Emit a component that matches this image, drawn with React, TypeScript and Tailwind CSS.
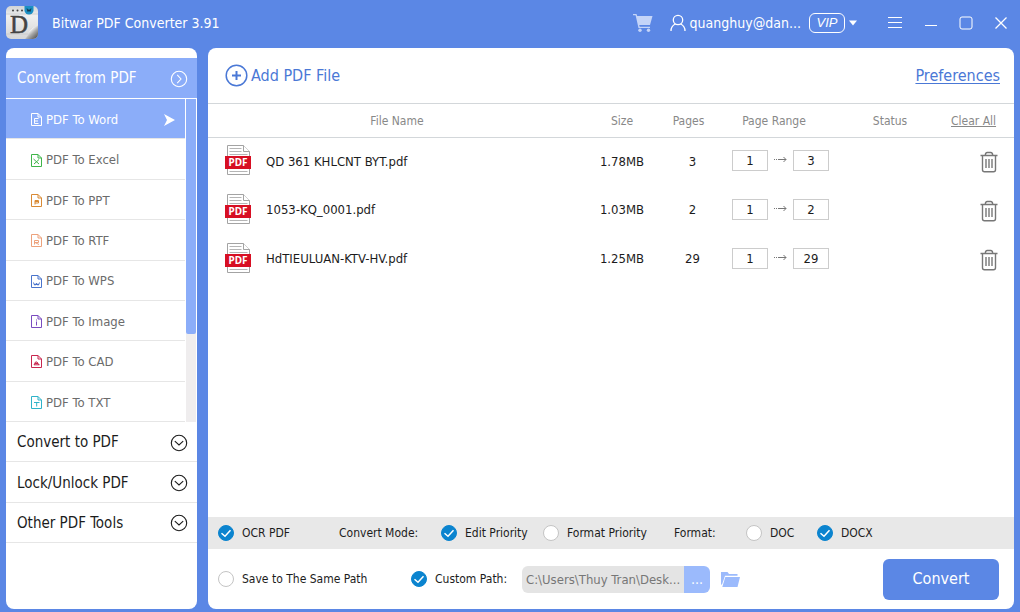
import { useState } from 'react'
import { clsx } from 'clsx'

const FORMATS = [
  { id: 'word',  label: 'PDF To Word',  color: 'text-white' },
  { id: 'excel', label: 'PDF To Excel', color: 'text-[#3fb54a]' },
  { id: 'ppt',   label: 'PDF To PPT',   color: 'text-[#d98a35]' },
  { id: 'rtf',   label: 'PDF To RTF',   color: 'text-[#eda27c]' },
  { id: 'wps',   label: 'PDF To WPS',   color: 'text-[#4a74cc]' },
  { id: 'image', label: 'PDF To Image', color: 'text-[#7a4cc0]' },
  { id: 'cad',   label: 'PDF To CAD',   color: 'text-[#c8274f]' },
  { id: 'txt',   label: 'PDF To TXT',   color: 'text-[#2fb3c9]' },
]

const SECTIONS = ['Convert to PDF', 'Lock/Unlock PDF', 'Other PDF Tools']

const FILES = [
  { name: 'QD 361 KHLCNT BYT.pdf', size: '1.78MB', pages: 3 },
  { name: '1053-KQ_0001.pdf',      size: '1.03MB', pages: 2 },
  { name: 'HdTIEULUAN-KTV-HV.pdf', size: '1.25MB', pages: 29 },
]

// Small strokes drawn inside each format's page icon
const MARKS: Record<string, string> = {
  word:  'M7.500 5.500h-4v5h4M3.500 8h3.500',
  excel: 'M2.500 5l5.500 5M8 5.500l-5 4.500',
  ppt:   'M4 10.500v-4h3.500v2.500h-3.500M4 7.500h3',
  rtf:   'M3.500 10.500v-4h4v2h-3.500l4 2',
  wps:   'M2.500 7.500l1 2.500h1l1-2 1 2h1l1-2.500M3 9.500h5',
  image: 'M5.500 4.500v1M5.500 6.500v4',
  cad:   'M3 10l1.500-3h1.500l2 3M3 9.800h5.500M4 8.500h3',
  txt:   'M3 6.500h5.500M5.700 6.500v4',
}

function FormatIcon({ id, className }: { id: string; className?: string }) {
  return (
    <svg className={className} width="11" height="13" viewBox="0 0 11 13" fill="none" stroke="currentColor">
      <path d="M.5.5H7l3.500 3.500v8.500H.5z" />
      <path d="M7 .5v3.500h3.500" />
      <path d={MARKS[id]} />
    </svg>
  )
}

function CircleChevron({ right }: { right?: boolean }) {
  return (
    <svg width="18" height="18" viewBox="0 0 18 18" fill="none" stroke="currentColor" strokeWidth="1.1">
      <circle cx="9" cy="9" r="7.700" />
      <path d={right ? 'M7.200 4.800 11 9l-3.800 4.200' : 'M4.800 7.200 9 11l4.200-3.800'} />
    </svg>
  )
}

function Logo() {
  return (
    <svg width="34" height="34" viewBox="0 0 34 34" aria-hidden="true">
      <defs>
        <linearGradient id="paper" x1="0" y1="0" x2="0" y2="1">
          <stop offset="0" stopColor="#cfd3d6" />
          <stop offset=".3" stopColor="#efefef" />
          <stop offset="1" stopColor="#d6d6d6" />
        </linearGradient>
        <linearGradient id="curl" x1=".2" y1=".2" x2=".8" y2=".9">
          <stop offset="0" stopColor="#777" />
          <stop offset=".3" stopColor="#eee" />
          <stop offset=".6" stopColor="#aaa" />
          <stop offset="1" stopColor="#666" />
        </linearGradient>
      </defs>
      <rect x="1" y="0" width="32" height="33" rx="5" fill="url(#paper)" />
      <path d="M1 8h32M1 28h24" stroke="#c2c4c6" strokeWidth=".6" />
      <circle cx="8" cy="4.500" r="1" fill="#444" />
      <circle cx="12.500" cy="4.500" r="1" fill="#444" />
      <circle cx="17" cy="4.500" r="1" fill="#444" />
      <path d="M19.500 0h9v4.500a4.500 4 0 0 1-9 0z" fill="#1b8fc4" />
      <path d="M22 2.500l1 3 1-2 1 2 1-3" fill="none" stroke="#12374c" />
      <text x="5" y="27" fontFamily="Liberation Serif, serif" fontSize="25" fill="#444" stroke="#444" strokeWidth=".5">D</text>
      <path d="M33 19c-2 3-5 2-7 3.500s-2 6.500-6 10.500h8a5 5 0 0 0 5-5z" fill="url(#curl)" />
    </svg>
  )
}

function PdfIcon() {
  return (
    <svg width="26" height="30" viewBox="0 0 26 30" aria-hidden="true">
      <path d="M2.500.5h16l6 6v23h-22z" fill="#fff" stroke="#a3a3a3" />
      <path d="M18.500.5v6h6" fill="#fff" stroke="#a3a3a3" />
      <path d="M4.500 3.500h12M4.500 6.500h12M4.500 9.500h18M4.500 26.500h18" stroke="#b5b5b5" />
      <path d="M0 11h26v13H0z" fill="#d70f23" />
      <text x="13" y="21" textAnchor="middle" fontFamily="Noto Sans, sans-serif" fontSize="10" fontWeight="700" fill="#fff">PDF</text>
    </svg>
  )
}

function ArrowIcon() {
  return (
    <svg width="13" height="8" viewBox="0 0 13 8" fill="none" stroke="#777">
      <path d="M0 3.500h5" strokeDasharray="1 1" />
      <path d="M5 3.500h7M9.500 1l2.500 2.500L9.500 6" />
    </svg>
  )
}

function TrashIcon() {
  return (
    <svg width="18" height="22" viewBox="0 0 18 22" fill="none" stroke="#777" strokeWidth="1.4">
      <path d="M.5 4.500h17M5.300 4.500c0-2 .7-3 2-3h3.400c1.300 0 2 1 2 3M2.500 4.500v14.200a2 2 0 0 0 2 2h9a2 2 0 0 0 2-2V4.500" />
      <path d="M6 8v9M9 8v9M12 8v9" />
    </svg>
  )
}

interface TickProps {
  label: string
  type?: 'radio' | 'checkbox'
  name?: string
  defaultChecked?: boolean
  className?: string
}

function Tick({ label, type = 'radio', name, defaultChecked, className }: TickProps) {
  return (
    <label className={clsx('flex items-center gap-2 whitespace-nowrap', className)}>
      <span className="grid size-4 place-items-center">
        <input
          type={type}
          name={name}
          defaultChecked={defaultChecked}
          className="peer col-start-1 row-start-1 size-4 appearance-none rounded-full border border-[#c4c4c4] bg-white checked:border-[#0b84cf] checked:bg-[#0b84cf]"
        />
        <svg className="pointer-events-none invisible col-start-1 row-start-1 peer-checked:visible" width="16" height="16" viewBox="0 0 16 16" fill="none" stroke="#fff" strokeWidth="1.5">
          <path d="M3.500 8.200 7 11.300l5.500-6" />
        </svg>
      </span>
      {label}
    </label>
  )
}

function TitleBar() {
  return (
    <header className="flex h-12 items-center pr-3 pb-[2px] pl-[5px] text-white">
      <Logo />
      <h1 className="ml-[13px] text-sm">Bitwar PDF Converter 3.91</h1>
      <div className="ml-auto flex items-center">
        <button aria-label="Cart" className="mr-4">
          <svg width="22" height="20" viewBox="0 0 22 20" fill="#c4d4f8">
            <path d="M1 1h3.500l.7 2H20.500l-2.500 9H7.200l.5 1.800H18V15H6.500L3.600 2.300H1z" />
            <circle cx="8" cy="17.300" r="1.700" />
            <circle cx="16.500" cy="17.300" r="1.700" />
          </svg>
        </button>
        <button className="flex items-center gap-1 text-sm">
          <svg width="16" height="18" viewBox="0 0 16 18" fill="none" stroke="currentColor" strokeWidth="1.3">
            <circle cx="8" cy="6" r="4.700" />
            <path d="M1 17c0-4 2-6 4.500-7M15 17c0-4-2-6-4.500-7" />
          </svg>
          quanghuy@dan...
          <span className="ml-1 flex h-5 w-9 items-center justify-center rounded-md border border-white font-['Liberation_Sans',sans-serif] text-[13px] italic">VIP</span>
          <svg width="8" height="6" viewBox="0 0 8 6" fill="currentColor"><path d="M0 .5h8L4 5.500z" /></svg>
        </button>
        <div className="ml-[30px] flex items-center gap-[21px]">
          <button aria-label="Menu">
            <svg width="16" height="14" viewBox="0 0 16 14" stroke="currentColor"><path d="M1 1.500h14M1 6.500h14M1 11.500h14" /></svg>
          </button>
          <button aria-label="Minimize">
            <svg width="14" height="14" viewBox="0 0 14 14" stroke="currentColor"><path d="M1 9.500h12" /></svg>
          </button>
          <button aria-label="Maximize">
            <svg width="14" height="14" viewBox="0 0 14 14" fill="none" stroke="currentColor"><rect x="1" y="1" width="12" height="12" rx="2" /></svg>
          </button>
          <button aria-label="Close">
            <svg width="14" height="14" viewBox="0 0 14 14" stroke="currentColor" strokeWidth="1.300"><path d="M1.500 1.500l11 11M12.500 1.500l-11 11" /></svg>
          </button>
        </div>
      </div>
    </header>
  )
}

function Sidebar() {
  const [active, setActive] = useState('word')

  return (
    <nav className="w-[191px] shrink-0 overflow-hidden rounded-lg bg-white pt-[10px]">
      <button className="flex h-[41px] w-full items-center justify-between border-b border-white bg-[#8badf9] pt-px pr-[9px] pl-[11px] text-[15px] text-white">
        Convert from PDF
        <CircleChevron right />
      </button>
      <div className="flex h-[323px]">
        <ul className="grid flex-1 grid-rows-8">
          {FORMATS.map(({ id, label, color }) => (
            <li key={id} className="border-b border-[#e6e6e6]">
              <button
                onClick={() => setActive(id)}
                className={clsx(
                  'flex h-full w-full items-center gap-1 pt-[2px] pr-[10px] pl-[25px] text-[13px]',
                  active === id ? 'bg-[#8badf9] text-white' : 'text-[#6b6b6b]'
                )}
              >
                <FormatIcon id={id} className={color} />
                {label}
                {active === id && (
                  <svg className="ml-auto" width="11" height="12" viewBox="0 0 11 12" fill="currentColor">
                    <path d="M0 0l11 6L0 12l3-6z" />
                  </svg>
                )}
              </button>
            </li>
          ))}
        </ul>
        {/* Scrollbar */}
        <div className="w-3 border-x border-white bg-[#efedee]">
          <div className="h-[235px] rounded-b-xs bg-[#8badf9]" />
        </div>
      </div>
      <div className="grid h-[121px] grid-rows-3">
        {SECTIONS.map((label) => (
          <button key={label} className="flex items-center justify-between border-b border-[#e6e6e6] pt-[2px] pr-[9px] pl-[11px] text-[15px] text-[#1c1c1c]">
            {label}
            <CircleChevron />
          </button>
        ))}
      </div>
    </nav>
  )
}

function FileTable() {
  return (
    <table className="w-full table-fixed border-collapse">
      <colgroup>
        <col className="w-[58px]" />
        <col />
        <col className="w-[72px]" />
        <col className="w-[61px]" />
        <col className="w-[110px]" />
        <col className="w-[122px]" />
        <col className="w-[63px]" />
      </colgroup>
      <thead>
        <tr className="h-[34px] border-y border-[#d3d7da] text-xs text-[#888]">
          <th colSpan={2} className="font-normal">File Name</th>
          <th className="font-normal">Size</th>
          <th className="font-normal">Pages</th>
          <th className="font-normal">Page Range</th>
          <th className="font-normal">Status</th>
          <th className="pr-[18px] text-right font-normal whitespace-nowrap">
            <button className="underline">Clear All</button>
          </th>
        </tr>
      </thead>
      <tbody className="text-[13px] text-[#1c1c1c]">
        {FILES.map(({ name, size, pages }) => (
          <tr key={name} className="h-[49px]">
            <td className="pb-1 pl-[17px]"><PdfIcon /></td>
            <td className="truncate pb-[2px]">{name}</td>
            <td className="pb-[2px] text-center">{size}</td>
            <td className="pb-[2px] pl-2 text-center">{pages}</td>
            <td className="pb-1">
              <div className="flex items-center justify-end gap-[6px]">
                <input aria-label={`First page of ${name}`} defaultValue={1} className="h-[21px] w-9 border border-[#ccc] text-center" />
                <ArrowIcon />
                <input aria-label={`Last page of ${name}`} defaultValue={pages} className="h-[21px] w-9 border border-[#ccc] text-center" />
              </div>
            </td>
            <td />
            <td className="pr-4">
              <button aria-label={`Remove ${name}`} className="ml-auto block"><TrashIcon /></button>
            </td>
          </tr>
        ))}
      </tbody>
    </table>
  )
}

function Options() {
  return (
    <footer className="mt-auto text-xs text-[#1c1c1c]">
      <div className="flex h-8 items-center bg-[#e8e8e8] px-[10px]">
        <Tick type="checkbox" label="OCR PDF" defaultChecked className="w-[121px]" />
        <span className="w-[102px]">Convert Mode:</span>
        <Tick name="mode" label="Edit Priority" defaultChecked className="w-[102px]" />
        <Tick name="mode" label="Format Priority" className="w-[131px]" />
        <span className="w-[72px]">Format:</span>
        <Tick name="format" label="DOC" className="w-[71px]" />
        <Tick name="format" label="DOCX" defaultChecked />
      </div>
      <div className="flex h-[60px] items-center pr-[15px] pl-[10px]">
        <Tick name="path" label="Save to The Same Path" className="w-[193px]" />
        <Tick name="path" label="Custom Path:" defaultChecked className="w-[111px]" />
        <input
          aria-label="Output folder"
          readOnly
          value="C:\Users\Thuy Tran\Desk..."
          className="h-[27px] w-[162px] rounded-l-md bg-[#e4e4e4] px-1 text-[13px] text-[#777]"
        />
        <button aria-label="Browse" className="flex h-[27px] w-[26px] items-center justify-center rounded-r-md bg-[#9bbafc] text-sm text-white">...</button>
        <button aria-label="Open folder" className="ml-[11px]">
          <svg width="19" height="17" viewBox="0 0 19 17" fill="#9bbafc">
            <path d="M0 14V1h6.500l1.500 2h8.500v1.800H4L1.200 13z" />
            <path d="M4.300 6H19l-2.500 10H1.300z" />
          </svg>
        </button>
        <button className="ml-auto h-[41px] w-[116px] rounded-md bg-[#5b87e5] text-base text-white">Convert</button>
      </div>
    </footer>
  )
}

export default function App() {
  return (
    <div className="flex min-h-screen flex-col bg-[#5b87e5] font-['DejaVu_Sans_Condensed','Noto_Sans',sans-serif] text-[#222]">
      <TitleBar />
      <div className="flex flex-1 gap-[11px] px-[6px] pb-[3px]">
        <Sidebar />
        <main className="flex flex-1 flex-col overflow-hidden rounded-lg bg-white">
          <div className="flex h-[55px] items-center justify-between pr-[14px] pl-[17px] text-base text-[#4a78d6]">
            <button className="flex items-center gap-[3px]">
              <svg width="23" height="23" viewBox="0 0 23 23" fill="none" stroke="currentColor">
                <circle cx="11.500" cy="11.500" r="10.300" strokeWidth="1.500" />
                <path d="M11.500 7v9M7 11.500h9" strokeWidth="2" />
              </svg>
              Add PDF File
            </button>
            <a href="#preferences" className="underline underline-offset-2">Preferences</a>
          </div>
          <FileTable />
          <Options />
        </main>
      </div>
    </div>
  )
}
